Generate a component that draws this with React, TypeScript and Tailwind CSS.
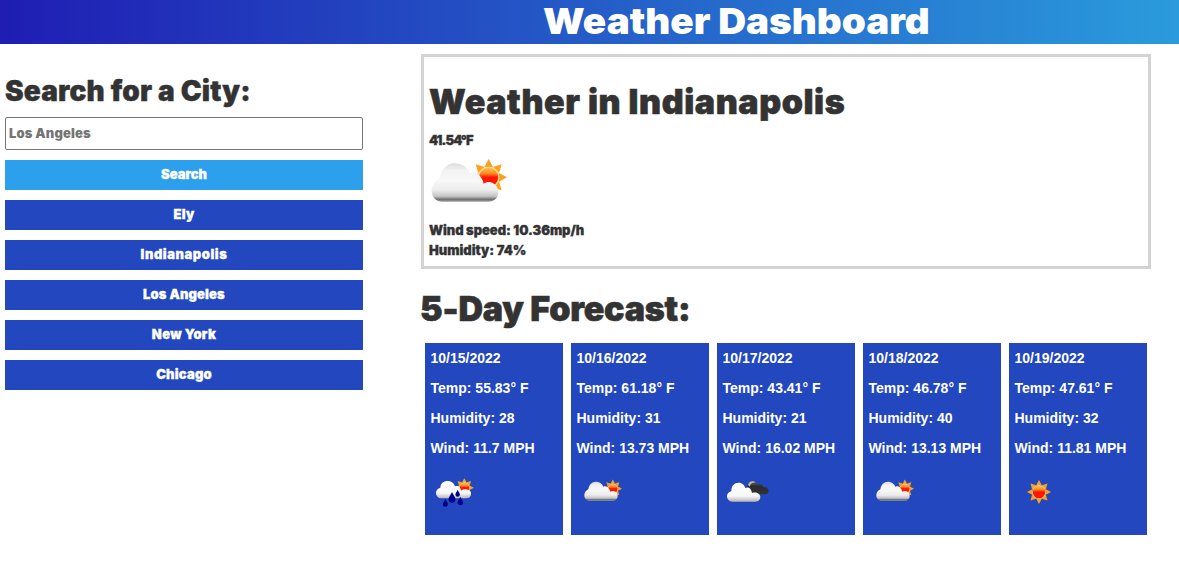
import React from "react";

const rays = [0, 45, 90, 135, 180, 225, 270, 315];

function Defs({ id }: { id: string }) {
  return (
    <defs>
      <linearGradient id={`${id}-cloud`} x1="0" y1="0" x2="0" y2="1">
        <stop offset="0" stopColor="#dcdcdc" />
        <stop offset="0.18" stopColor="#f2f2f2" />
        <stop offset="0.45" stopColor="#f8f8f8" />
        <stop offset="0.7" stopColor="#ececec" />
        <stop offset="0.86" stopColor="#c4c4c4" />
        <stop offset="0.94" stopColor="#707070" />
        <stop offset="1" stopColor="#a0a0a0" />
      </linearGradient>
      <linearGradient id={`${id}-white`} x1="0" y1="0" x2="0" y2="1">
        <stop offset="0" stopColor="#ffffff" />
        <stop offset="0.7" stopColor="#f8f8f8" />
        <stop offset="1" stopColor="#b5b5b5" />
      </linearGradient>
      <linearGradient id={`${id}-sun`} x1="0" y1="0" x2="0" y2="1">
        <stop offset="0" stopColor="#ffc04a" />
        <stop offset="0.3" stopColor="#ff8a20" />
        <stop offset="0.5" stopColor="#ff1500" />
        <stop offset="1" stopColor="#ff1a00" />
      </linearGradient>
      <linearGradient id={`${id}-dark`} x1="0" y1="0" x2="0" y2="1">
        <stop offset="0" stopColor="#666666" />
        <stop offset="0.4" stopColor="#2b2b2b" />
        <stop offset="1" stopColor="#333333" />
      </linearGradient>
    </defs>
  );
}

function Sun({ id, x, y, s }: { id: string; x: number; y: number; s: number }) {
  return (
    <g transform={`translate(${x} ${y}) scale(${s})`}>
      {rays.map((a) => (
        <path key={a} d="M-13 -31 L0 -55 L13 -31 Z" fill="#fba11c" transform={`rotate(${a})`} />
      ))}
      <circle r="32" fill="#ffd591" />
      <circle r="28.5" fill={`url(#${id}-sun)`} />
    </g>
  );
}

const cloudPath =
  "M52 155 C34 155 20 142 20 122 C20 104 31 92 44 86 C48 58 66 40 89 40 C111 40 128 53 134 70 C150 62 170 74 176 101 C186 94 198 95 207 101 C216 107 220 116 220 126 C220 143 208 155 190 155 Z";

function CloudSun({ id, className, box }: { id: string; className: string; box: "large" | "small" }) {
  return (
    <svg className={className} viewBox={box === "large" ? "0 0 270 180" : "-36 -30 360 240"}>
      <Defs id={id} />
      <Sun id={id} x={191} y={82} s={1} />
      <path d={cloudPath} fill={`url(#${id}-cloud)`} />
    </svg>
  );
}

function Rain({ className }: { className: string }) {
  const drop = "M0 -14 C3 -6 9 -1 9 5 A9 9 0 0 1 -9 5 C-9 -1 -3 -6 0 -14 Z";
  const drops = [
    [46, 98, 0.85],
    [66, 82, 1.15],
    [83, 70, 0.75],
    [91, 93, 0.9],
  ];
  return (
    <svg className={className} viewBox="0 0 150 120">
      <Defs id="rain" />
      <Sun id="rain" x={103} y={53} s={0.52} />
      <path
        d="M35 85 C25 85 18 78 18 69 C18 61 23 55 31 53 C31 41 41 33 53 33 C65 33 72 40 75 49 C84 45 92 50 93 62 C99 57 110 57 117 60 C122 64 123 67 123 72 C123 80 117 85 108 85 Z"
        fill="url(#rain-white)"
      />
      {drops.map(([x, y, s]) => (
        <path key={x} d={drop} fill="#00008f" transform={`translate(${x} ${y}) scale(${s})`} />
      ))}
    </svg>
  );
}

function Clouds({ className }: { className: string }) {
  return (
    <svg className={className} viewBox="0 0 180 120">
      <Defs id="clouds" />
      <path
        d="M82 50 C82 39 89 33 97 33 C105 33 110 38 112 44 C120 38 129 44 130 52 C139 50 146 56 146 63 C146 69 141 73 135 73 L100 73 Z"
        fill="url(#clouds-dark)"
      />
      <path d="M84 44 C88 33 101 31 106 38 C97 37 91 42 89 50 Z" fill="#b9b9b9" />
      <path
        d="M37 95 C28 95 21 88 21 79 C21 71 26 66 34 63 C34 47 43 38 56 38 C67 38 73 45 76 54 C86 49 94 55 96 69 C106 65 121 69 121 82 C121 90 115 95 106 95 Z"
        fill="url(#clouds-white)"
      />
    </svg>
  );
}

function Clear({ className }: { className: string }) {
  return (
    <svg className={className} viewBox="0 0 150 120">
      <Defs id="clear" />
      <Sun id="clear" x={72} y={66} s={0.66} />
    </svg>
  );
}

const days = [
  { date: "10/15/2022", temp: "55.83", humidity: 28, wind: "11.7", icon: <Rain className="ml-[5px] h-10 w-[50px]" /> },
  { date: "10/16/2022", temp: "61.18", humidity: 31, wind: "13.73", icon: <CloudSun id="sunday" box="small" className="ml-1 h-10 w-[60px]" /> },
  { date: "10/17/2022", temp: "43.41", humidity: 21, wind: "16.02", icon: <Clouds className="ml-[3px] h-10 w-[60px]" /> },
  { date: "10/18/2022", temp: "46.78", humidity: 40, wind: "13.13", icon: <CloudSun id="tuesday" box="small" className="ml-1 h-10 w-[60px]" /> },
  { date: "10/19/2022", temp: "47.61", humidity: 32, wind: "11.81", icon: <Clear className="ml-1.5 h-10 w-[50px]" /> },
];

const cities = [
  { name: "Ely", spacing: "tracking-[0.2px]" },
  { name: "Indianapolis", spacing: "tracking-[0.55px]" },
  { name: "Los Angeles", spacing: "tracking-[0.15px]" },
  { name: "New York", spacing: "tracking-[0.3px]" },
  { name: "Chicago", spacing: "tracking-[0.2px]" },
];

export default function App() {
  return (
    <div className="h-[579px] overflow-hidden bg-white font-['Inter',sans-serif] text-[13px] leading-5 font-black text-[#333333]">
      <header className="flex h-11 items-start bg-[linear-gradient(90deg,#1f1db3,#2a9bdc)] pl-[543px]">
        <h1 className="origin-left scale-x-[1.072] text-[36px] leading-[42px] whitespace-nowrap text-white">
          Weather Dashboard
        </h1>
      </header>
      <div className="flex">
        <aside className="flex w-[363px] flex-col gap-2.5 pt-[27px] pl-[5px]">
          <h2 className="h-9 text-[28px] leading-10 tracking-[0.17px] whitespace-nowrap [-webkit-text-stroke:0.4px_#333333]">
            Search for a City:
          </h2>
          <input
            className="h-[33px] w-full rounded-[2px] border border-[#767676] px-[3px] pb-0.5 tracking-[0.15px] outline-none placeholder:text-[#757575] placeholder:opacity-100"
            placeholder="Los Angeles"
          />
          <button className="h-[30px] bg-[#2da0ed] pb-0.5 text-white [-webkit-text-stroke:0.3px_#ffffff]">Search</button>
          {cities.map((c) => (
            <button key={c.name} className="h-[30px] bg-[#2247be] pb-0.5 text-white [-webkit-text-stroke:0.3px_#ffffff]">
              <span className={c.spacing}>{c.name}</span>
            </button>
          ))}
        </aside>
        <main className="ml-[58px] w-[730px] pt-2.5">
          <section className="h-[215px] border-[3px] border-[#d3d3d3] pt-[19px] pl-[5px] [-webkit-text-stroke:0.3px_#333333]">
            <h2 className="h-[54px] text-[34px] leading-[51px] tracking-[0.57px] whitespace-nowrap [-webkit-text-stroke:0.6px_#333333]">
              Weather in Indianapolis
            </h2>
            <p className="h-5 tracking-[-0.9px]">41.54°F</p>
            <CloudSun id="now" box="large" className="-ml-1 h-[60px] w-[90px]" />
            <p className="mt-[10px] tracking-[-0.05px]">Wind speed: 10.36mp/h</p>
            <p>Humidity: 74%</p>
          </section>
          <h2 className="mt-[15px] -ml-px h-[59px] text-[34px] leading-[50px] tracking-[-0.2px] whitespace-nowrap [-webkit-text-stroke:0.6px_#333333]">
            5-Day Forecast:
          </h2>
          <div className="flex gap-2 pl-1 font-['Liberation_Sans',Arial,sans-serif] text-[14px] font-bold text-white">
            {days.map((d) => (
              <article key={d.date} className="flex h-48 w-[138px] flex-col bg-[#2247be] pt-[5px]">
                <div className="flex flex-col gap-2.5 pl-[5.5px] whitespace-nowrap">
                  <p>{d.date}</p>
                  <p>Temp: {d.temp}° F</p>
                  <p>Humidity: {d.humidity}</p>
                  <p>Wind: {d.wind} MPH</p>
                </div>
                <div className="mt-3">{d.icon}</div>
              </article>
            ))}
          </div>
        </main>
      </div>
    </div>
  );
}
